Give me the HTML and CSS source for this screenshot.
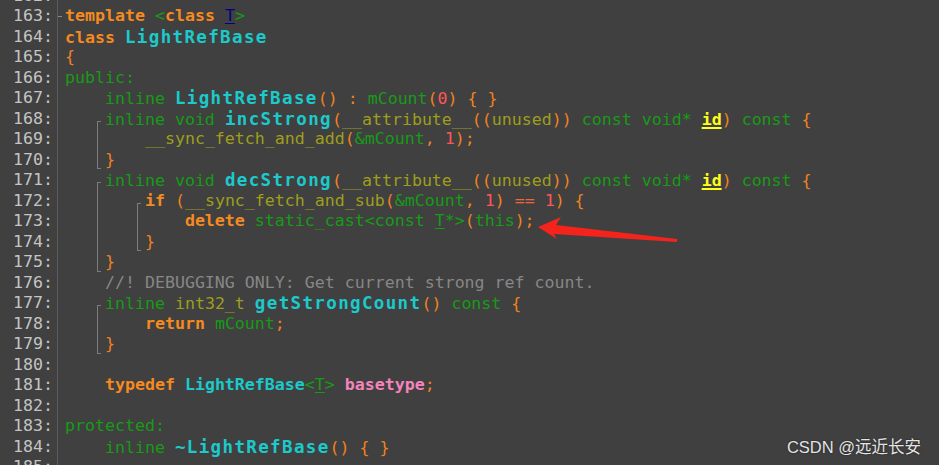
FILE: index.html
```html
<!DOCTYPE html>
<html lang="en">
<head>
<meta charset="utf-8">
<title>LightRefBase</title>
<link rel="stylesheet" href="styles.css">
</head>
<body>
<div class="editor">
  <div class="gutter">
    <div class="ln">162:</div>
    <div class="ln tick">163:</div>
    <div class="ln">164:</div>
    <div class="ln">165:</div>
    <div class="ln">166:</div>
    <div class="ln">167:</div>
    <div class="ln">168:</div>
    <div class="ln">169:</div>
    <div class="ln">170:</div>
    <div class="ln">171:</div>
    <div class="ln">172:</div>
    <div class="ln">173:</div>
    <div class="ln">174:</div>
    <div class="ln">175:</div>
    <div class="ln">176:</div>
    <div class="ln">177:</div>
    <div class="ln">178:</div>
    <div class="ln">179:</div>
    <div class="ln">180:</div>
    <div class="ln">181:</div>
    <div class="ln">182:</div>
    <div class="ln">183:</div>
    <div class="ln">184:</div>
    <div class="ln">185:</div>
  </div>
  <div class="code">
    <div class="line"> </div>
    <div class="line"><span class="kw">template</span> <span class="gr">&lt;</span><span class="kw">class</span> <span class="tp">T</span><span class="gr">&gt;</span></div>
    <div class="line"><span class="kw">class</span> <span class="fn">LightRefBase</span></div>
    <div class="line"><span class="op">{</span></div>
    <div class="line"><span class="gr">public:</span></div>
    <div class="line">    <span class="gr">inline</span> <span class="fn">LightRefBase</span><span class="op">() :</span> <span class="gr">mCount</span><span class="op">(</span><span class="num">0</span><span class="op">) { }</span></div>
    <div class="fold f1">
      <div class="line">    <span class="gr">inline void</span> <span class="fn">incStrong</span><span class="op">(</span><span class="ol">__attribute__</span><span class="op">((</span><span class="ol">unused</span><span class="op">))</span> <span class="gr">const void*</span> <span class="id">id</span><span class="op">)</span> <span class="gr">const</span> <span class="op">{</span></div>
      <div class="line">        <span class="ol">__sync_fetch_and_add</span><span class="op">(</span><span class="gr">&amp;mCount</span><span class="op">, </span><span class="num">1</span><span class="op">);</span></div>
      <div class="line">    <span class="op">}</span></div>
    </div>
    <div class="fold f1">
      <div class="line">    <span class="gr">inline void</span> <span class="fn">decStrong</span><span class="op">(</span><span class="ol">__attribute__</span><span class="op">((</span><span class="ol">unused</span><span class="op">))</span> <span class="gr">const void*</span> <span class="id">id</span><span class="op">)</span> <span class="gr">const</span> <span class="op">{</span></div>
      <div class="fold f2">
        <div class="line">        <span class="kw">if</span> <span class="op">(</span><span class="ol">__sync_fetch_and_sub</span><span class="op">(</span><span class="gr">&amp;mCount</span><span class="op">, </span><span class="num">1</span><span class="op">)</span> <span class="eq">==</span> <span class="num">1</span><span class="op">) {</span></div>
        <div class="line">            <span class="kw">delete</span> <span class="gr">static_cast&lt;const <u>T</u>*&gt;</span><span class="op">(</span><span class="gr">this</span><span class="op">);</span></div>
        <div class="line">        <span class="op">}</span></div>
      </div>
      <div class="line">    <span class="op">}</span></div>
    </div>
    <div class="line">    <span class="cm">//! DEBUGGING ONLY: Get current strong ref count.</span></div>
    <div class="fold f1">
      <div class="line">    <span class="gr">inline</span> <span class="ol">int32_t</span> <span class="fn">getStrongCount</span><span class="op">()</span> <span class="gr">const</span> <span class="op">{</span></div>
      <div class="line">        <span class="kw">return</span> <span class="gr">mCount</span><span class="op">;</span></div>
      <div class="line">    <span class="op">}</span></div>
    </div>
    <div class="line"> </div>
    <div class="line">    <span class="kw">typedef</span> <span class="cl">LightRefBase</span><span class="gr">&lt;<u>T</u>&gt;</span> <span class="pk">basetype</span><span class="op">;</span></div>
    <div class="line"> </div>
    <div class="line"><span class="gr">protected:</span></div>
    <div class="line">    <span class="gr">inline</span> <span class="fn">~LightRefBase</span><span class="op">() { }</span></div>
    <div class="line"> </div>
  </div>
  <svg class="arrow" width="939" height="465" viewBox="0 0 939 465">
    <polygon points="538,227 561,217 556,225 677,239 677,242 554,234 557,239" fill="#f4231c"/>
  </svg>
  <div class="mark">CSDN @远近长安</div>
</div>
</body>
</html>
```

FILE: styles.css
```css
html, body {
  margin: 0;
  padding: 0;
  background: #404040;
  overflow: hidden;
}

.editor {
  position: relative;
  display: flex;
  width: 939px;
  height: 465px;
  overflow: hidden;
  background: #404040;
  font-family: "DejaVu Sans Mono", "Liberation Mono", monospace;
  font-size: 16.6px;
  line-height: 20.5px;
}

.gutter {
  width: 57px;
  flex: none;
  border-right: 1px solid #5c5c5c;
  margin-top: -14.5px;
  color: #c4c4c4;
  text-align: right;
}

.ln {
  height: 20.5px;
  padding-right: 4px;
  white-space: pre;
  position: relative;
}

.tick::after {
  content: "";
  position: absolute;
  right: -5px;
  top: 10px;
  width: 4px;
  border-top: 1px solid #8a8a8a;
}

.code {
  flex: 1;
  padding-left: 7px;
  margin-top: -14.5px;
}

.line {
  height: 20.5px;
  white-space: pre;
}

.fold {
  position: relative;
}

.fold::before {
  content: "";
  position: absolute;
  top: 12px;
  bottom: 1px;
  width: 3px;
  border-left: 1px solid #7c7c7c;
  border-top: 1px solid #7c7c7c;
  border-bottom: 1px solid #7c7c7c;
}

.f1::before { left: 32px; }
.f1 .f2::before { left: 72px; }

.kw { color: #f58a1f; font-weight: bold; }
.gr { color: #179b17; }
.gr u { text-decoration-thickness: 1px; text-underline-offset: 2px; }
.op { color: #f0821e; }
.fn {
  color: #1cc9cb;
  font-weight: bold;
  font-size: 17.5px;
  letter-spacing: 1.36px;
}
.cl { color: #1cc9cb; font-weight: bold; }
.ol { color: #9e9e1c; }
.num { color: #ff5656; }
.eq { color: #f4643a; }
.cm { color: #878787; }
.pk { color: #f584bd; font-weight: bold; }
.id {
  color: #ffff1a;
  font-weight: bold;
  text-decoration: underline;
  text-decoration-color: #ffff1a;
  text-decoration-thickness: 2px;
  text-underline-offset: 2px;
}
.tp {
  color: #00008c;
  text-decoration: underline;
  text-underline-offset: 2px;
}

.arrow {
  position: absolute;
  left: 0;
  top: 0;
  pointer-events: none;
}

.mark {
  position: absolute;
  right: 18px;
  bottom: 8px;
  font-family: "Liberation Sans", "Noto Sans CJK SC", sans-serif;
  font-size: 16.5px;
  line-height: 20px;
  color: #e4e4e4;
  text-shadow: 0 0 2px rgba(0, 0, 0, 0.6);
}
```
